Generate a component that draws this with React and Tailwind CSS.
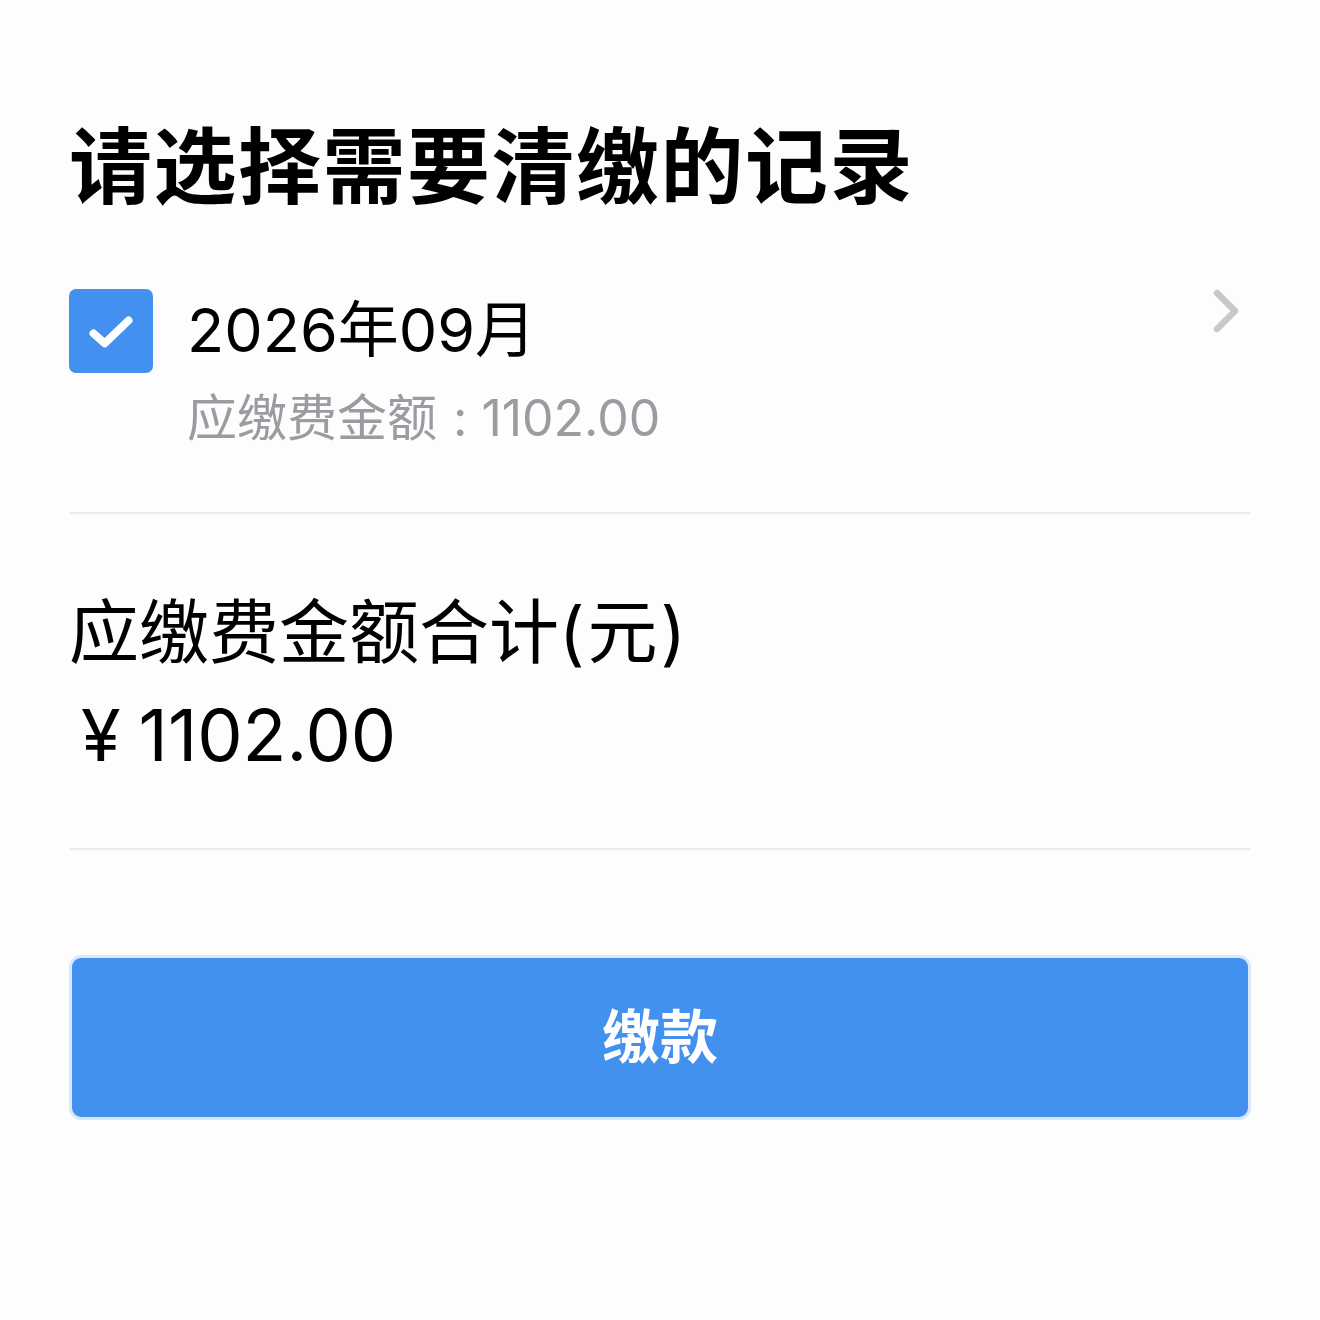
import React, { useState } from "react";

const font = { fontFamily: '"Inter", "Noto Sans CJK SC", sans-serif' };

const App = () => {
  const [checked, setChecked] = useState(true);
  const amount = "1102.00";

  return (
    <div className="w-[1320px] h-[1320px] bg-[#fdfdfd] px-[69px] pt-[112px] text-black" style={font}>
      <h1 className="text-[83px] leading-[110px] font-bold tracking-[1.5px]">请选择需要清缴的记录</h1>

      {/* record row */}
      <div className="mt-[67px] flex items-start pb-[64px] border-b-2 border-[#ececec]">
        <button
          onClick={() => setChecked(!checked)}
          className="w-[84px] h-[84px] rounded-[7px] bg-[#4390f0] flex items-center justify-center shrink-0"
        >
          {checked && (
            <svg width="56" height="56" viewBox="0 0 24 24" fill="none">
              <path d="M4.5 13l4.8 4.3L19.5 7.5" stroke="white" strokeWidth="3.4" strokeLinecap="round" strokeLinejoin="round" />
            </svg>
          )}
        </button>
        <div className="ml-[34px] flex-1">
          <div className="text-[61px] leading-[88px] mt-[-3px]">2026年09月</div>
          <div className="text-[50px] leading-[60px] mt-[14px] text-[#9b9ca1]">
            应缴费金额<span className="ml-[16px] mr-[14px]">:</span>{amount}
          </div>
        </div>
        <svg className="mt-[-4px] mr-[6px]" width="36" height="52" viewBox="0 0 36 52" fill="none">
          <path d="M8 8l18 18L8 44" stroke="#c7c7cc" strokeWidth="6.5" strokeLinecap="round" strokeLinejoin="round" />
        </svg>
      </div>

      {/* total */}
      <div className="pt-[74px] pb-[63px] border-b-2 border-[#ececec]">
        <div className="text-[70px] leading-[90px]">
          应缴费金额合计<span className="tracking-[3px]">(元)</span>
        </div>
        <div className="text-[72px] leading-[100px] mt-[7px] ml-[12px]">
          ¥<span className="ml-[18px]">{amount}</span>
        </div>
      </div>

      <button className="mt-[105px] w-full h-[165px] rounded-[12px] bg-[#4391ef] border-[3px] border-[#dbe8fb] text-white text-[58px] font-bold">
        缴款
      </button>
    </div>
  );
};

export default App;
